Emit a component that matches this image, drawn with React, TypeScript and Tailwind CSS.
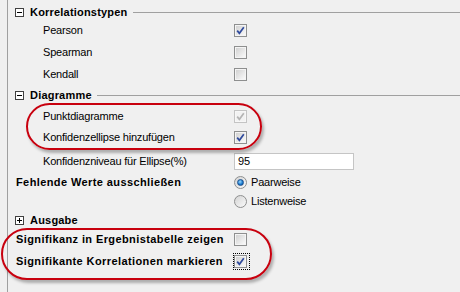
import React from 'react'

function Check({ checked, disabled }: { checked?: boolean; disabled?: boolean }) {
  return (
    <span
      className={`flex h-[13px] w-[13px] shrink-0 items-center justify-center border p-[1px] ${
        disabled ? 'border-[#c4c4c4] bg-[#f7f7f7]' : 'border-[#8e8f8f] bg-[#f4f4f4]'
      }`}
    >
      <span
        className={`flex h-full w-full items-center justify-center ${
          disabled ? 'bg-[#f2f2f2]' : 'bg-linear-to-br from-[#d2d2d2] to-[#f9f9f9]'
        }`}
      >
        {checked && (
          <svg width="9" height="9" viewBox="0 0 9 9">
            <path
              d="M1.2 4.6 L3.4 7.3 L7.8 1.2"
              fill="none"
              stroke={disabled ? '#b4b4b4' : '#2f4a9c'}
              strokeWidth="1.7"
            />
          </svg>
        )}
      </span>
    </span>
  )
}

function Radio({ checked }: { checked?: boolean }) {
  return (
    <span className="flex h-[13px] w-[13px] shrink-0 items-center justify-center rounded-full border border-[#8e8f8f] bg-linear-to-br from-[#d4d4d4] to-[#fafafa]">
      {checked && (
        <span className="h-[7px] w-[7px] rounded-full border border-[#1c4f8c] bg-[radial-gradient(circle_at_40%_35%,#9ad8ff,#1677cc_60%,#0b4f9a)]" />
      )}
    </span>
  )
}

function Box({ open }: { open?: boolean }) {
  return (
    <span className="relative flex h-[9px] w-[9px] shrink-0 items-center justify-center border border-[#404040] bg-white">
      <span className="absolute h-px w-[5px] bg-black" />
      {!open && <span className="absolute h-[5px] w-px bg-black" />}
    </span>
  )
}

function Header({ title, open, line = true, mt }: { title: string; open?: boolean; line?: boolean; mt: string }) {
  return (
    <div className={`flex h-[18px] items-center ${mt}`}>
      <div className="ml-[15px] flex items-center gap-[6px]">
        <Box open={open} />
        <span className="font-bold tracking-[0.2px]">{title}</span>
      </div>
      {line && <div className="ml-[5px] h-px flex-1 bg-[#a0a0a0]" />}
    </div>
  )
}

function Row({ label, mt, bold, children }: { label: string; mt: string; bold?: boolean; children?: React.ReactNode }) {
  return (
    <div className={`flex h-[18px] items-center ${mt}`}>
      <span className={bold ? 'ml-[16px] w-[218px] font-bold tracking-[0.4px]' : 'ml-[43px] w-[191px]'}>
        {label}
      </span>
      {children}
    </div>
  )
}

export default function App() {
  return (
    <div
      className="relative h-[292px] w-[460px] overflow-hidden bg-[#f0f0f0] text-[11px] leading-none tracking-[-0.2px] text-black"
      style={{ fontFamily: '"Liberation Sans", Arial, sans-serif' }}
    >
      <div className="absolute left-[7px] top-0 h-full w-px bg-[#a0a0a0]" />
      <div className="flex flex-col pt-[3px]">
        <Header title="Korrelationstypen" open mt="mt-0" />
        <Row label="Pearson" mt="mt-0">
          <Check checked />
        </Row>
        <Row label="Spearman" mt="mt-[4px]">
          <Check />
        </Row>
        <Row label="Kendall" mt="mt-[4px]">
          <Check />
        </Row>
        <Header title="Diagramme" open mt="mt-[3px]" />
        <Row label="Punktdiagramme" mt="mt-[3px]">
          <Check checked disabled />
        </Row>
        <Row label="Konfidenzellipse hinzufügen" mt="mt-[3px]">
          <Check checked />
        </Row>
        <Row label="Konfidenzniveau für Ellipse(%)" mt="mt-[6px]">
          <div className="flex h-[17px] w-[120px] items-center border border-[#c5c5c5] bg-white pl-[3px]">95</div>
        </Row>
        <Row label="Fehlende Werte ausschließen" bold mt="mt-[3px]">
          <div className="flex items-center gap-[4px]">
            <Radio checked />
            <span>Paarweise</span>
          </div>
        </Row>
        <div className="mt-px flex h-[18px] items-center">
          <div className="ml-[234px] flex items-center gap-[4px]">
            <Radio />
            <span>Listenweise</span>
          </div>
        </div>
        <Header title="Ausgabe" line={false} mt="mt-px" />
        <Row label="Signifikanz in Ergebnistabelle zeigen" bold mt="mt-px">
          <Check />
        </Row>
        <Row label="Signifikante Korrelationen markieren" bold mt="mt-[4px]">
          <span className="-ml-px flex border border-dotted border-black py-px pl-0 pr-[2px]">
            <Check checked />
          </span>
        </Row>
      </div>

      <div className="pointer-events-none absolute left-[26px] top-[103px] h-[47px] w-[236px] rounded-[24px] border-2 border-[#c8000e] shadow-[2px_3px_3px_rgba(0,0,0,0.28)]" />
      <div className="pointer-events-none absolute left-[1px] top-[228px] h-[52px] w-[271px] rounded-[27px] border-2 border-[#c8000e] shadow-[2px_3px_3px_rgba(0,0,0,0.28)]" />
    </div>
  )
}
